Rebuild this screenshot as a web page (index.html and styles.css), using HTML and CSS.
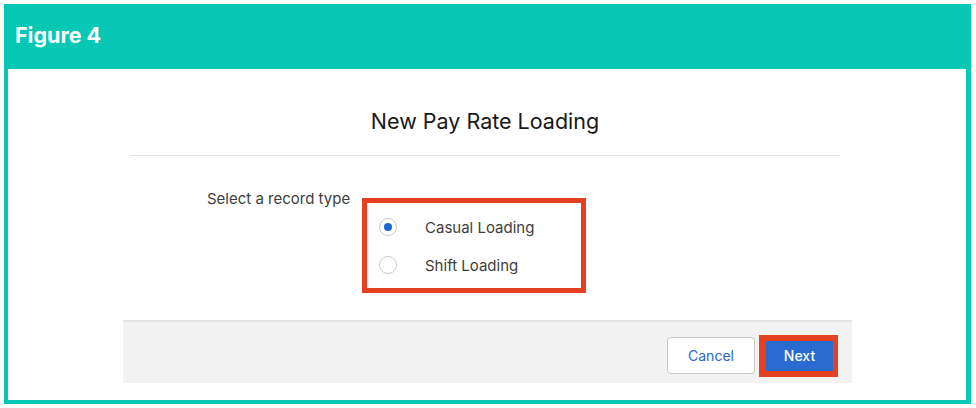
FILE: index.html
```html
<!DOCTYPE html>
<html lang="en">
<head>
<meta charset="utf-8">
<title>Figure 4</title>
<link rel="stylesheet" href="styles.css">
</head>
<body>
<div class="frame">
  <div class="fig-header">Figure 4</div>
  <div class="fig-body">
    <div class="modal">
      <div class="modal-head">
        <h2 class="modal-title">New Pay Rate Loading</h2>
      </div>
      <div class="modal-content">
        <div class="field-label">Select a record type</div>
        <div class="radio-group highlight">
          <label class="radio-row">
            <span class="radio checked"></span>
            <span class="radio-text">Casual Loading</span>
          </label>
          <label class="radio-row">
            <span class="radio"></span>
            <span class="radio-text">Shift Loading</span>
          </label>
        </div>
      </div>
      <div class="modal-footer">
        <button class="btn btn-neutral">Cancel</button>
        <span class="btn-highlight"><button class="btn btn-brand">Next</button></span>
      </div>
    </div>
  </div>
</div>
</body>
</html>
```

FILE: styles.css
```css
html, body {
  margin: 0;
  padding: 0;
  background: #ffffff;
}

body {
  font-family: Inter, "Liberation Sans", Arial, sans-serif;
  color: #3e3e3c;
}

.frame {
  margin: 4px 0 0 4px;
  width: 967px;
  height: 400px;
  box-sizing: border-box;
  border: 4px solid #07c8b4;
  border-top: 0;
  border-right-width: 5px;
  display: flex;
  flex-direction: column;
  background: #ffffff;
}

.fig-header {
  height: 65px;
  flex: none;
  background: #07c8b4;
  color: #ffffff;
  font-family: Inter, "Open Sans", sans-serif;
  font-weight: 700;
  font-size: 21.5px;
  line-height: 24px;
  padding: 19px 0 0 11px;
  box-sizing: border-box;
  margin: 0 -5px 0 -4px;
}

.fig-body {
  flex: 1;
  padding-left: 115px;
}

.modal {
  width: 729px;
}

.modal-head {
  margin: 0 12px 0 7px;
  padding: 37px 0 19px;
  border-bottom: 1px solid #e5e5e5;
}

.modal-title {
  margin: 0;
  font-weight: 400;
  font-size: 21.5px;
  line-height: 30px;
  text-align: center;
  color: #181818;
}

.modal-content {
  display: flex;
  align-items: flex-start;
  padding: 33px 0 27px 84px;
}

.field-label {
  width: 155px;
  flex: none;
  font-size: 15px;
  line-height: 20px;
  color: #3e3e3c;
}

.radio-group {
  margin-top: 9px;
  display: flex;
  flex-direction: column;
}

.highlight {
  width: 224px;
  height: 95px;
  box-sizing: border-box;
  border: 5px solid #e5401f;
  padding: 5px 0 4px 12px;
}

.radio-row {
  height: 38px;
  display: flex;
  align-items: center;
}

.radio {
  width: 18px;
  height: 18px;
  box-sizing: border-box;
  border: 1px solid #c9c9c9;
  border-radius: 50%;
  background: #ffffff;
  display: flex;
  align-items: center;
  justify-content: center;
  flex: none;
}

.radio.checked::after {
  content: "";
  width: 8px;
  height: 8px;
  border-radius: 50%;
  background: #1b66d0;
}

.radio-text {
  margin-left: 28px;
  font-size: 15px;
  color: #3e3e3c;
}

.modal-footer {
  height: 63px;
  box-sizing: border-box;
  background: #f2f2f2;
  border-top: 2px solid #e4e4e4;
  display: flex;
  justify-content: flex-end;
  align-items: center;
  padding: 6px 14px 0 0;
  gap: 4px;
}

.btn {
  font-family: Inter, "Liberation Sans", Arial, sans-serif;
  font-size: 14px;
  border-radius: 4px;
  cursor: pointer;
  margin: 0;
}

.btn-neutral {
  width: 88px;
  height: 37px;
  background: #ffffff;
  border: 1px solid #c9c9c9;
  color: #2a68c3;
}

.btn-highlight {
  display: flex;
  border: 6px solid #e5401f;
  border-left-width: 7px;
  border-right-width: 5px;
}

.btn-brand {
  width: 67px;
  height: 30px;
  background: #2a6bd1;
  border: 0;
  border-radius: 0;
  color: #ffffff;
  font-weight: 500;
}
```
